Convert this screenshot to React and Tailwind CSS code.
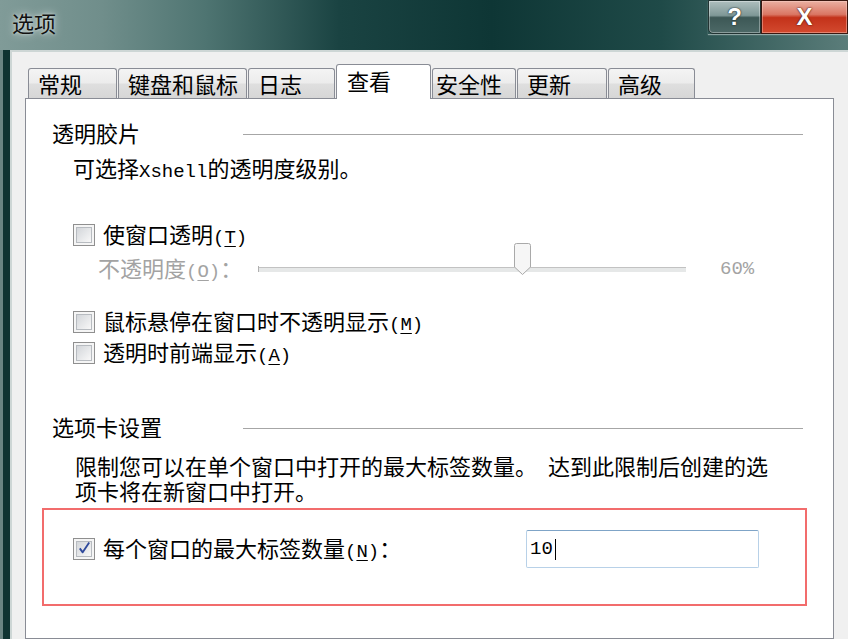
import React from 'react';

const tabs = [
  { label: '常规', w: 'w-[89px]' },
  { label: '键盘和鼠标', w: 'w-[129px]' },
  { label: '日志', w: 'w-[87px]' },
  { label: '查看', w: 'w-[95px]', active: true },
  { label: '安全性', w: 'w-[84px]', tight: true },
  { label: '更新', w: 'w-[90px]' },
  { label: '高级', w: 'w-[87px]' },
];

const Mono = ({ children, className = '' }) => (
  <span className={`font-['Liberation_Mono',monospace] text-[19px] ${className}`}>{children}</span>
);

// mnemonic letter like (T), underlined
const Key = ({ k }) => (
  <Mono>
    (<span className="underline underline-offset-[3px]">{k}</span>)
  </Mono>
);

const CheckBox = ({ checked }) => (
  <span className="flex h-[22px] w-[22px] shrink-0 border border-[#8f8f8f] bg-[#f5f5f5] p-[2px]">
    <span className="flex h-full w-full items-center justify-center border border-[#b7bbc0] bg-[linear-gradient(135deg,#d3d6da,#f8f8f8)]">
      {checked && (
        <svg width="18" height="18" viewBox="0 0 18 18" className="-mt-[2px] ml-[1px]">
          <path d="M2.5 9.5 L6.5 15 L15.5 1.5" fill="none" stroke="#2f4a9c" strokeWidth="2.6" strokeLinejoin="round" />
        </svg>
      )}
    </span>
  </span>
);

const SectionHeader = ({ title }) => (
  <div className="flex h-[30px] items-center pl-[26px] pr-[30px]">
    <span className="w-[191px] leading-[30px]">{title}</span>
    <span className="mt-[4px] h-px flex-1 bg-[#a6a6a6]" />
  </div>
);

export default function App() {
  return (
    <div className="flex h-[639px] w-[848px] flex-col overflow-hidden bg-[radial-gradient(ellipse_at_28%_45%,rgba(185,208,204,0.55),transparent_22%),radial-gradient(ellipse_at_55%_80%,rgba(90,140,136,0.45),transparent_30%),linear-gradient(90deg,#809b98_0%,#708e8b_12%,#4f7572_24%,#1a4342_40%,#0e3635_58%,#1f4a48_78%,#5b7d7a_100%)] font-['Noto_Sans_CJK_SC',sans-serif] text-[22px] text-black">
      {/* title bar */}
      <div className="flex h-[50px] shrink-0 items-start justify-between">
        <span className="pl-[12px] pt-[7px] leading-[30px] text-[#111] [text-shadow:0_0_8px_rgba(255,255,255,0.8),0_0_3px_rgba(255,255,255,0.6)]">
          选项
        </span>
        <div className="flex h-[34px] shadow-[0_1px_1px_rgba(255,255,255,0.45)]">
          <div className="flex w-[53px] items-center justify-center rounded-bl-[5px] border border-[#233433] bg-[linear-gradient(180deg,#aebfbe_0%,#7f9897_45%,#3d5856_52%,#4d6967_100%)] font-['Liberation_Sans',sans-serif] text-[24px] font-bold text-white shadow-[inset_0_0_0_1px_rgba(255,255,255,0.35)] [text-shadow:0_0_2px_#1c2a2a,0_0_1px_#1c2a2a]">
            ?
          </div>
          <div className="flex w-[87px] items-center justify-center border border-[#3a1810] bg-[linear-gradient(180deg,#eab0a2_0%,#da7663_42%,#c3321a_52%,#d34a2f_100%)] font-['Liberation_Sans',sans-serif] text-[24px] font-bold text-white shadow-[inset_0_0_0_1px_rgba(255,220,210,0.4)] [text-shadow:0_0_2px_#4a1a10,0_0_1px_#4a1a10]">
            X
          </div>
        </div>
      </div>

      <div className="flex flex-1">
        {/* left window frame */}
        <div className="w-[10px] shrink-0 bg-[linear-gradient(90deg,#6a8583_0px,#6a8583_3px,#0f3432_3px,#0f3432_10px)]" />

        {/* client area */}
        <div className="flex flex-1 flex-col border-l-2 border-t-2 border-[#cdd6d5] bg-[#f0f0f0] pl-[13px] pt-[12px]">
          {/* tabs */}
          <div className="relative z-10 flex items-end gap-[1px] pl-[3px]">
            {tabs.map((t) =>
              t.active ? (
                <div
                  key={t.label}
                  className={`${t.w} -mb-px flex h-[35px] items-center rounded-t-[3px] border border-b-0 border-[#898c95] bg-white pb-[3px] pl-[10px]`}
                >
                  {t.label}
                </div>
              ) : (
                <div
                  key={t.label}
                  className={`${t.w} flex h-[30px] items-center rounded-t-[3px] border border-b-0 border-[#898c95] bg-[linear-gradient(180deg,#f4f4f4_0%,#ececec_48%,#dfdfdf_52%,#d6d6d6_100%)] ${t.tight ? 'pl-[3px]' : 'pl-[9px]'}`}
                >
                  {t.label}
                </div>
              )
            )}
          </div>

          {/* panel */}
          <div className="flex w-[809px] flex-1 flex-col border border-[#898c95] bg-white pt-[18px]">
            <SectionHeader title="透明胶片" />
            <div className="mt-[5px] pl-[47px] leading-[30px]">
              可选择<Mono>Xshell</Mono>的透明度级别。
            </div>

            <div className="mt-[33px] flex h-[30px] items-center gap-[8px] pl-[47px]">
              <CheckBox />
              <span>
                使窗口透明<Key k="T" />
              </span>
            </div>

            <div className="mt-[4px] flex h-[30px] items-center pl-[72px] text-[#a3a3a3]">
              <span className="w-[160px]">
                不透明度<Key k="O" />：
              </span>
              <div className="relative h-[32px] w-[428px]">
                <div className="absolute left-0 right-0 top-[14px] h-[5px] border-t border-[#c2c2c2] bg-[#e6e8e8]" />
                <div className="absolute left-0 top-[13px] h-[6px] w-px bg-[#b0b0b0]" />
                <svg className="absolute left-[255px] top-[-11px]" width="19" height="34" viewBox="0 0 19 34">
                  <path
                    d="M1.5 3.5 Q1.5 1.5 3.5 1.5 H15.5 Q17.5 1.5 17.5 3.5 V25 L9.5 32.5 L1.5 25 Z"
                    fill="#f6f6f6"
                    stroke="#a9a9a9"
                    strokeWidth="1"
                  />
                </svg>
              </div>
              <Mono className="ml-[34px]">60%</Mono>
            </div>

            <div className="mt-[23px] flex h-[30px] items-center gap-[8px] pl-[47px]">
              <CheckBox />
              <span>
                鼠标悬停在窗口时不透明显示<Key k="M" />
              </span>
            </div>
            <div className="mt-[1px] flex h-[30px] items-center gap-[8px] pl-[47px]">
              <CheckBox />
              <span>
                透明时前端显示<Key k="A" />
              </span>
            </div>

            <div className="mt-[43px]">
              <SectionHeader title="选项卡设置" />
            </div>
            <div className="mt-[12px] pl-[49px] leading-[25px]">
              限制您可以在单个窗口中打开的最大标签数量。　达到此限制后创建的选
              <br />
              项卡将在新窗口中打开。
            </div>

            <div className="ml-[16px] mt-[5px] h-[98px] w-[765px] border-2 border-[#f26c6c] pl-[29px] pt-[20px]">
              <div className="flex items-center">
                <div className="flex w-[453px] items-center gap-[8px]">
                  <CheckBox checked />
                  <span>
                    每个窗口的最大标签数量<Key k="N" />：
                  </span>
                </div>
                <div className="flex h-[38px] w-[233px] items-center rounded-[2px] border border-[#b8d1e8] border-t-[#7fa4c7] bg-white pl-[3px]">
                  <Mono>10</Mono>
                  <span className="ml-[2px] h-[21px] w-px bg-black" />
                </div>
              </div>
            </div>
          </div>
        </div>
      </div>
    </div>
  );
}
